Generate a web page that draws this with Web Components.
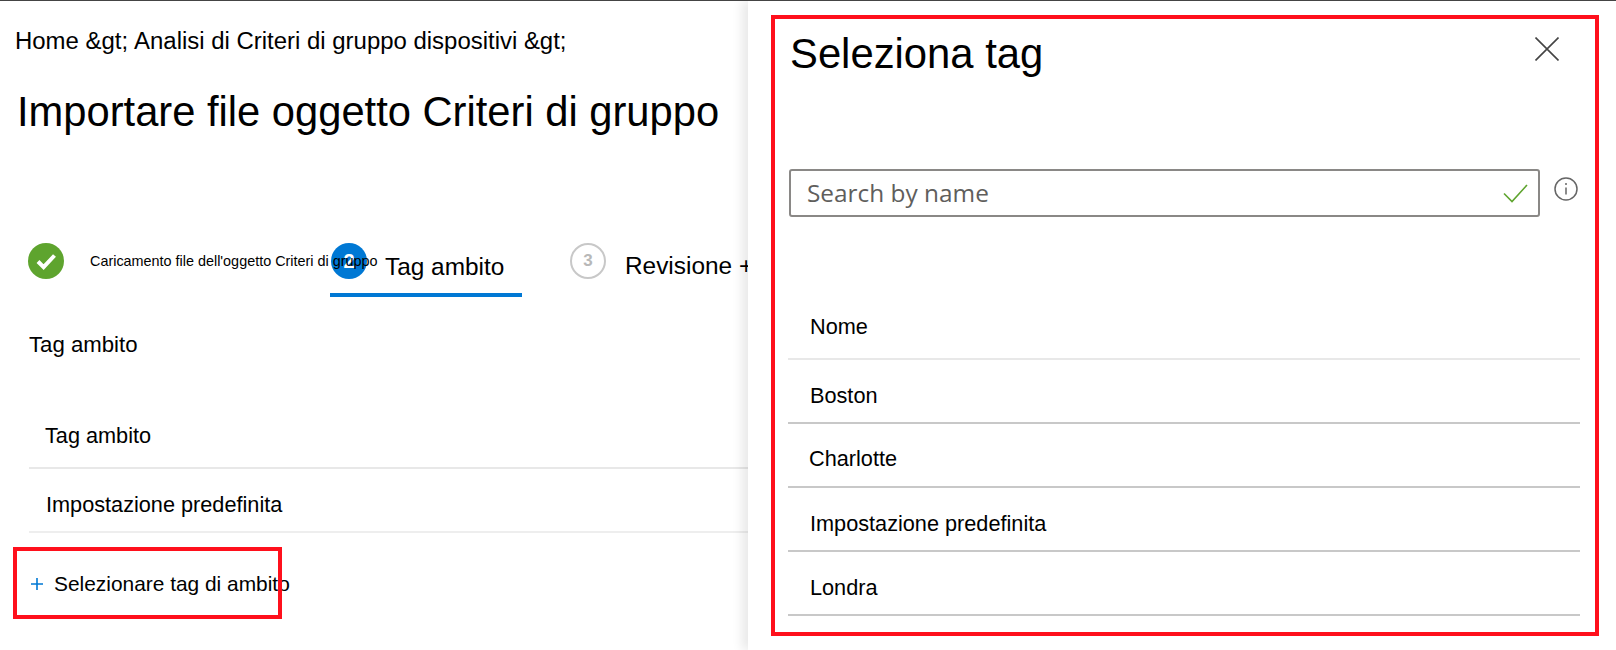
<!DOCTYPE html>
<html lang="it">
<head>
<meta charset="utf-8">
<title>Importare file oggetto Criteri di gruppo</title>
<style>
  html, body { margin: 0; padding: 0; background: #fff; }
  body { font-family: "Liberation Sans", Arial, sans-serif; color: #000; }
</style>
</head>
<body>
<gpo-app>
  <gpo-import-page slot="main"></gpo-import-page>
  <gpo-tag-panel slot="panel"></gpo-tag-panel>
</gpo-app>

<script>
// outer frame: dark hairline on top, wizard on the left, blade on the right
class GpoApp extends HTMLElement {
  connectedCallback() {
    this.attachShadow({ mode: 'open' });
    this.shadowRoot.innerHTML = `
      <style>
        :host {
          display: grid;
          grid-template-columns: 748px 1fr;
          width: 1616px;
          height: 650px;
          box-sizing: border-box;
          border-top: 1px solid #444;
          overflow: hidden;
        }
        .main { overflow: hidden; min-width: 0; }
        .panel { position: relative; box-shadow: -6px 0 10px rgba(0, 0, 0, 0.09); background: #fff; }
      </style>
      <div class="main"><slot name="main"></slot></div>
      <div class="panel"><slot name="panel"></slot></div>
    `;
  }
}

class GpoStep extends HTMLElement {
  connectedCallback() {
    const state = this.getAttribute('state');
    const num = this.getAttribute('num') || '';
    const mark = state === 'done'
      ? `<svg width="36" height="36" viewBox="0 0 36 36"><circle cx="18" cy="18" r="18" fill="#5ea42e"/><path d="M10 18.5l5.6 5.6L26.5 12.5" fill="none" stroke="#fff" stroke-width="4"/></svg>`
      : `<span class="num">${num}</span>`;
    this.attachShadow({ mode: 'open' });
    this.shadowRoot.innerHTML = `
      <style>
        :host {
          display: flex;
          position: relative;
          box-sizing: border-box;
          height: 54px;
          flex: none;
          white-space: nowrap;
        }
        /* the long first label runs over the next step's circle */
        :host([state="done"]) { width: 330px; padding-left: 28px; z-index: 1; }
        :host([state="active"]) { width: 192px; padding-left: 1px; border-bottom: 4px solid #0078d4; margin-right: 48px; }
        :host([state="todo"]) { width: 300px; }
        .mark { flex: none; width: 36px; height: 36px; }
        .num {
          display: flex;
          align-items: center;
          justify-content: center;
          box-sizing: border-box;
          width: 36px;
          height: 36px;
          border-radius: 50%;
          font-size: 20px;
          font-weight: 700;
        }
        :host([state="active"]) .num { background: #0078d4; color: #fff; }
        :host([state="todo"]) .num { border: 2px solid #c8c8c8; color: #b8b8b8; font-size: 17px; }
        .label { font-size: 24.4px; line-height: 30px; margin: 9px 0 0 18px; }
        :host([state="done"]) .label { font-size: 14.4px; line-height: 36px; margin: 0 0 0 26px; }
        :host([state="todo"]) .label { margin-left: 19px; margin-top: 8px; }
      </style>
      <div class="mark">${mark}</div>
      <div class="label"><slot></slot></div>
    `;
  }
}

class GpoRow extends HTMLElement {
  connectedCallback() {
    this.attachShadow({ mode: 'open' });
    this.shadowRoot.innerHTML = `
      <style>
        :host {
          display: flex;
          align-items: center;
          box-sizing: border-box;
          height: 64px;
          border-bottom: 2px solid var(--row-line, #e8e8e8);
          padding: var(--row-top, 0px) 0 0 var(--row-left, 16px);
          font-size: 21.7px;
          white-space: nowrap;
        }
      </style>
      <slot></slot>
    `;
  }
}

class GpoAddTag extends HTMLElement {
  connectedCallback() {
    this.attachShadow({ mode: 'open' });
    this.shadowRoot.innerHTML = `
      <style>
        :host {
          display: flex;
          align-items: center;
          position: relative;
          height: 30px;
          margin-top: 36px;
          padding-left: 31px;
          gap: 11px;
          font-size: 20.9px;
          white-space: nowrap;
        }
        svg { flex: none; }
        .frame {
          position: absolute;
          left: 13px;
          top: -22px;
          width: 269px;
          height: 72px;
          box-sizing: border-box;
          border: 4px solid #ff101c;
          pointer-events: none;
        }
      </style>
      <svg width="12" height="12" viewBox="0 0 12 12"><path d="M6 0v12M0 6h12" stroke="#0078d4" stroke-width="1.6" fill="none"/></svg>
      <span><slot></slot></span>
      <div class="frame"></div>
    `;
  }
}

class GpoImportPage extends HTMLElement {
  connectedCallback() {
    this.attachShadow({ mode: 'open' });
    this.shadowRoot.innerHTML = `
      <style>
        :host { display: block; width: 748px; padding-top: 25px; }
        .crumbs {
          display: flex;
          gap: 6px;
          height: 30px;
          line-height: 30px;
          padding-left: 15px;
          font-size: 23.95px;
          white-space: nowrap;
        }
        h1 {
          margin: 31px 0 0;
          padding-left: 17px;
          height: 50px;
          line-height: 50px;
          font-size: 41.7px;
          font-weight: 400;
          white-space: nowrap;
        }
        .steps { display: flex; margin-top: 106px; width: 748px; overflow: hidden; }
        h2 {
          margin: 33px 0 0;
          padding-left: 29px;
          height: 30px;
          line-height: 30px;
          font-size: 22.2px;
          font-weight: 400;
        }
        .table { margin: 45px 0 0 29px; }
      </style>
      <nav class="crumbs"><span>Home &amp;gt;</span><span>Analisi di Criteri di gruppo dispositivi &amp;gt;</span></nav>
      <h1>Importare file oggetto Criteri di gruppo</h1>
      <div class="steps">
        <gpo-step state="done" num="1">Caricamento file dell'oggetto Criteri di gruppo</gpo-step>
        <gpo-step state="active" num="2">Tag ambito</gpo-step>
        <gpo-step state="todo" num="3">Revisione +</gpo-step>
      </div>
      <h2>Tag ambito</h2>
      <div class="table">
        <gpo-row>Tag ambito</gpo-row>
        <gpo-row style="--row-top: 10px; --row-left: 17px; --row-line: #eeeeee">Impostazione predefinita</gpo-row>
      </div>
      <gpo-add-tag>Selezionare tag di ambito</gpo-add-tag>
    `;
  }
}

class GpoSearchBox extends HTMLElement {
  connectedCallback() {
    this.attachShadow({ mode: 'open' });
    this.shadowRoot.innerHTML = `
      <style>
        :host {
          display: flex;
          align-items: center;
          justify-content: space-between;
          box-sizing: border-box;
          width: 751px;
          height: 48px;
          flex: none;
          padding: 0 10px 0 16px;
          border: 2px solid #8a8886;
          border-radius: 3px;
          font-family: "Open Sans", sans-serif;
          font-size: 24.4px;
          color: #605e5c;
        }
        span { margin-top: -2px; }
      </style>
      <span><slot></slot></span>
      <svg width="25" height="19" viewBox="0 0 25 19"><path d="M1 9.5l8 8L24 1" fill="none" stroke="#5ea42e" stroke-width="1.6"/></svg>
    `;
  }
}

class GpoTagPanel extends HTMLElement {
  connectedCallback() {
    this.attachShadow({ mode: 'open' });
    this.shadowRoot.innerHTML = `
      <style>
        :host { display: block; position: relative; box-sizing: border-box; height: 649px; padding-top: 26px; }
        header {
          display: flex;
          justify-content: space-between;
          align-items: flex-start;
          margin: 0 57px 0 42px;
          height: 50px;
        }
        h2 { margin: 2px 0 0; font-size: 41.8px; line-height: 50px; font-weight: 400; }
        header svg { margin-top: 10px; }
        .search { display: flex; align-items: flex-start; gap: 14px; margin: 92px 0 0 41px; }
        .search svg { margin-top: 8px; flex: none; }
        .table { width: 792px; margin: 79px 0 0 40px; --row-left: 22px; --row-top: 10px; --row-line: #c8c8c8; }
        .table .head { --row-line: #e8e8e8; --row-top: 0px; }
        .frame {
          position: absolute;
          left: 23px;
          top: 14px;
          width: 828px;
          height: 621px;
          box-sizing: border-box;
          border: 4px solid #ff101c;
          pointer-events: none;
        }
      </style>
      <header>
        <h2>Seleziona tag</h2>
        <svg width="24" height="24" viewBox="0 0 24 24"><path d="M0.5 0.5l23 23M23.5 0.5l-23 23" fill="none" stroke="#444" stroke-width="1.6"/></svg>
      </header>
      <div class="search">
        <gpo-search-box>Search by name</gpo-search-box>
        <svg width="24" height="24" viewBox="0 0 24 24">
          <circle cx="12" cy="12" r="11" fill="none" stroke="#666" stroke-width="1.5"/>
          <path d="M12 10.5v7" stroke="#666" stroke-width="1.5" fill="none"/>
          <circle cx="12" cy="7" r="1" fill="#666"/>
        </svg>
      </div>
      <div class="table">
        <gpo-row class="head">Nome</gpo-row>
        <gpo-row>Boston</gpo-row>
        <gpo-row style="--row-left: 21px; --row-top: 8px">Charlotte</gpo-row>
        <gpo-row>Impostazione predefinita</gpo-row>
        <gpo-row>Londra</gpo-row>
      </div>
      <div class="frame"></div>
    `;
  }
}

customElements.define('gpo-app', GpoApp);
customElements.define('gpo-step', GpoStep);
customElements.define('gpo-row', GpoRow);
customElements.define('gpo-add-tag', GpoAddTag);
customElements.define('gpo-import-page', GpoImportPage);
customElements.define('gpo-search-box', GpoSearchBox);
customElements.define('gpo-tag-panel', GpoTagPanel);
</script>
</body>
</html>
